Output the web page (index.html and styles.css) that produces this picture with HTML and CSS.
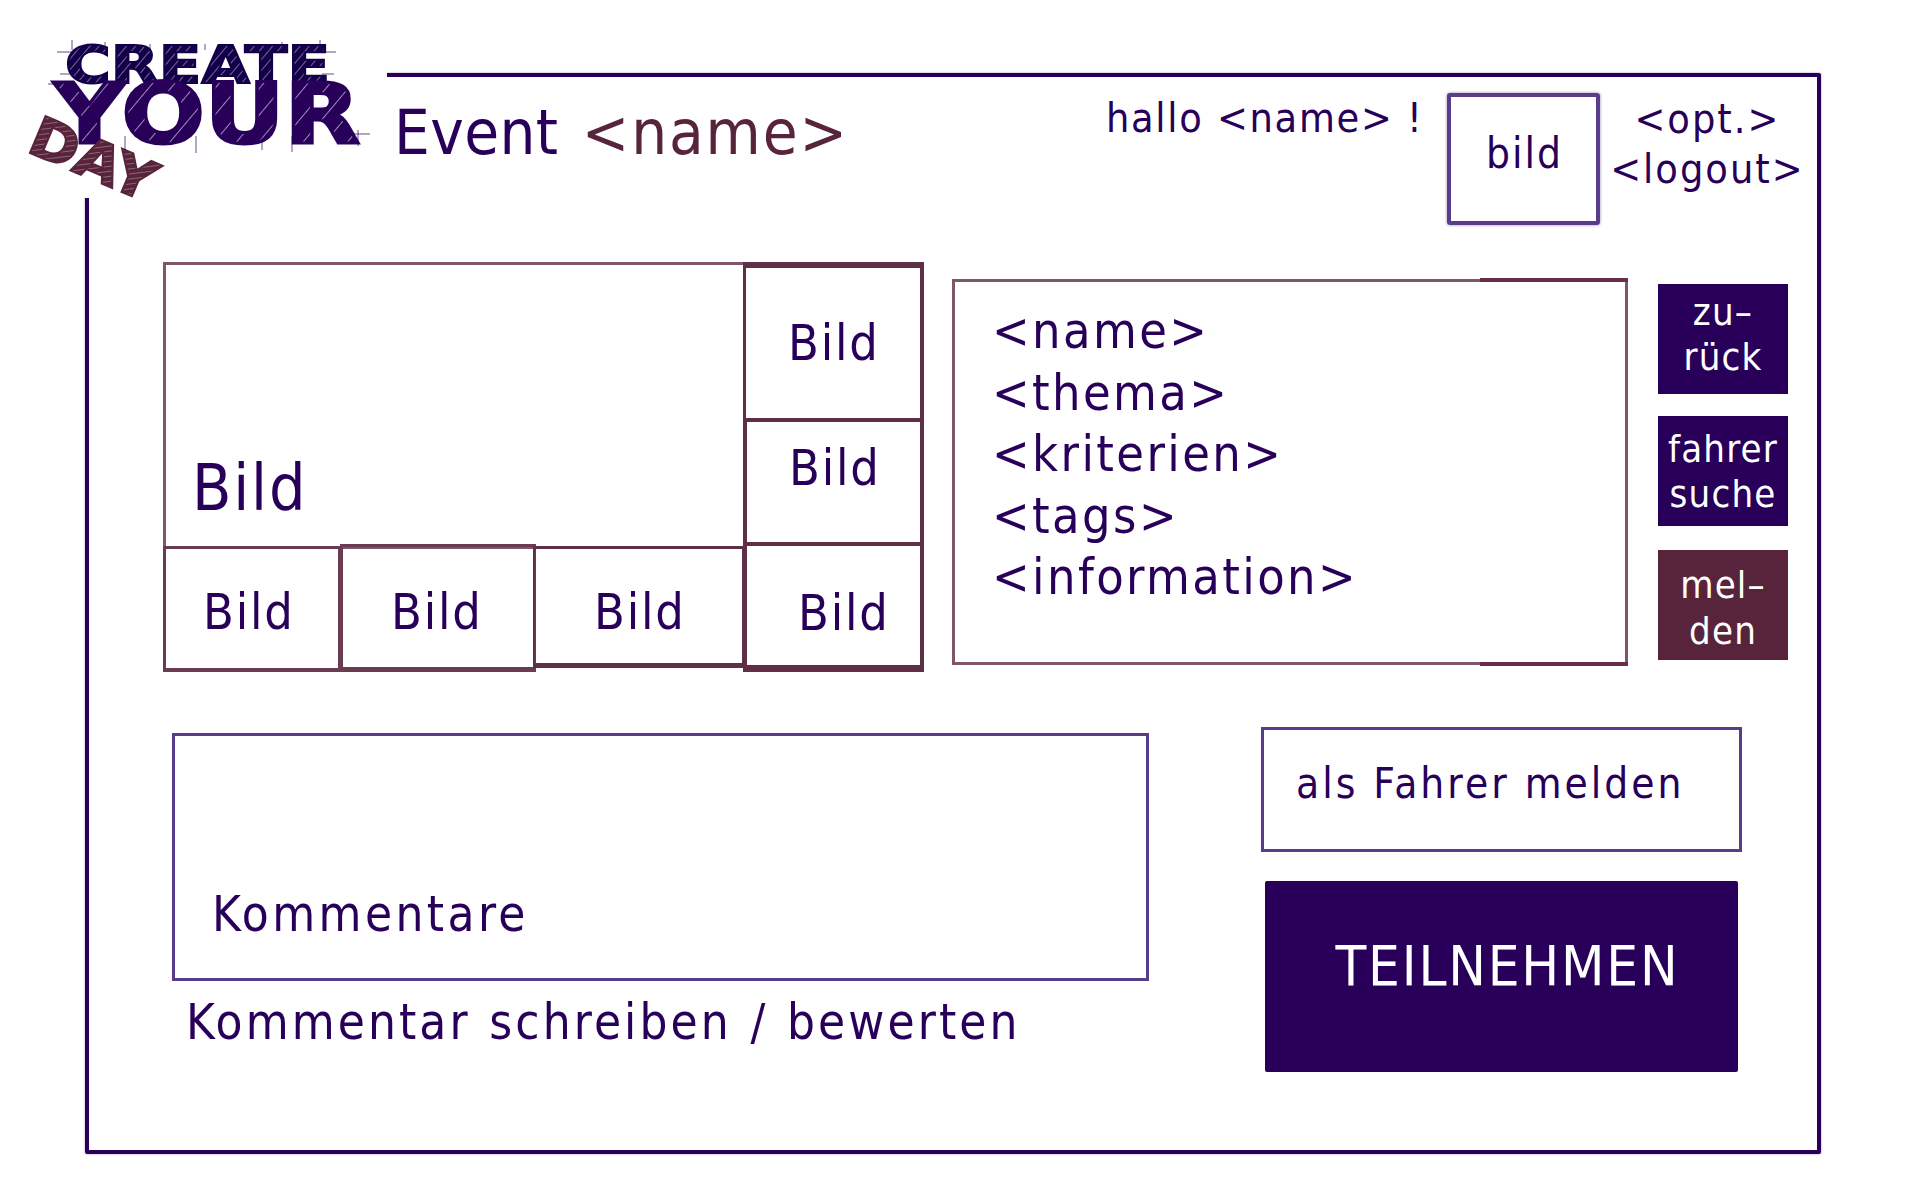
FILE: index.html
```html
<!DOCTYPE html>
<html lang="de">
  <head>
    <meta charset="UTF-8" />
    <meta name="viewport" content="width=device-width, initial-scale=1.0" />
    <title>Event</title>
    <link rel="stylesheet" href="styles.css">
  </head>
  <body>
    <svg class="logo" width="387" height="198" viewBox="0 0 387 198">
      <defs>
        <pattern id="hatch-navy" width="7" height="7" patternUnits="userSpaceOnUse" patternTransform="rotate(-50)">
          <rect width="7" height="7" fill="#14004a"></rect>
          <rect width="7" height="1" fill="#ffffff" fill-opacity="0.4"></rect>
        </pattern>
        <pattern id="hatch-purple" width="17" height="17" patternUnits="userSpaceOnUse" patternTransform="rotate(-50)">
          <rect width="17" height="17" fill="#28005a"></rect>
          <rect width="17" height="1" fill="#ffffff" fill-opacity="0.55"></rect>
        </pattern>
        <pattern id="hatch-maroon" width="5" height="5" patternUnits="userSpaceOnUse" patternTransform="rotate(-30)">
          <rect width="5" height="5" fill="#58243c"></rect>
          <rect width="5" height="1" fill="#ffffff" fill-opacity="0.3"></rect>
        </pattern>
      </defs>
      <text class="logo-word logo-create" x="65" y="83" textLength="265" lengthAdjust="spacingAndGlyphs">CREATE</text>
      <text class="logo-word logo-your" x="54" y="143" textLength="306" lengthAdjust="spacingAndGlyphs">YOUR</text>
      <text class="logo-word logo-day" transform="translate(25 151) rotate(23)" textLength="132" lengthAdjust="spacingAndGlyphs">DAY</text>
      <g class="logo-lines">
        <path d="M57 52H72M60 74H72M322 52H336M322 74H334M72 40V50M105 42V50M150 44V50M205 44V50M282 42V50M320 40V50"></path>
        <path d="M48 84H66M352 134H370M125 136V150M196 136V153M262 136V150M292 136V152M358 130V146"></path>
      </g>
    </svg>

    <main class="frame">
      <header class="topbar">
        <h1 class="event-title">Event <span class="event-name">&lt;name&gt;</span></h1>
        <div class="greeting">hallo &lt;name&gt; !</div>
        <div class="avatar">bild</div>
        <div class="user-links">
          <div>&lt;opt.&gt;</div>
          <div>&lt;logout&gt;</div>
        </div>
      </header>

      <section class="upper">
        <div class="gallery">
          <div class="gallery-left">
            <div class="pic pic-main">Bild</div>
            <div class="gallery-row">
              <div class="pic pic-a">Bild</div>
              <div class="pic pic-b">Bild</div>
              <div class="pic pic-c">Bild</div>
            </div>
          </div>
          <div class="gallery-right">
            <div class="pic pic-d">Bild</div>
            <div class="pic pic-e">Bild</div>
            <div class="pic pic-f">Bild</div>
          </div>
        </div>

        <div class="info">
          <div>&lt;name&gt;</div>
          <div>&lt;thema&gt;</div>
          <div>&lt;kriterien&gt;</div>
          <div>&lt;tags&gt;</div>
          <div>&lt;information&gt;</div>
        </div>

        <div class="side-buttons">
          <button class="side-btn side-btn-back">zu–<br />rück</button>
          <button class="side-btn side-btn-driver">fahrer<br />suche</button>
          <button class="side-btn side-btn-report">mel–<br />den</button>
        </div>
      </section>

      <section class="lower">
        <div class="comments-col">
          <div class="comments">Kommentare</div>
          <div class="write-comment">Kommentar schreiben / bewerten</div>
        </div>
        <div class="actions">
          <div class="driver-box">als Fahrer melden</div>
          <button class="join-btn">TEILNEHMEN</button>
        </div>
      </section>
    </main>
  </body>
</html>
```

FILE: styles.css
```css
* {
  box-sizing: border-box;
}

body {
  margin: 0;
  padding: 73px 0 0 85px;
  height: 1200px;
  overflow: hidden;
  position: relative;
  background: #fff;
  color: #28005a;
  font-family: "DejaVu Sans", sans-serif;
  font-stretch: condensed;
}

button {
  font: inherit;
  font-stretch: condensed;
  border: none;
  color: #fff;
  padding: 0;
}

.logo {
  position: absolute;
  top: 0;
  left: 0;
  background: #fff;
}
.logo-word {
  font-family: "DejaVu Sans", sans-serif;
  font-weight: bold;
  font-stretch: normal;
}
.logo-create {
  font-size: 51px;
  fill: url(#hatch-navy);
  stroke: #14004a;
  stroke-width: 2px;
}
.logo-your {
  font-size: 83px;
  fill: url(#hatch-purple);
  stroke: #28005a;
  stroke-width: 3px;
}
.logo-day {
  font-size: 55px;
  fill: url(#hatch-maroon);
  stroke: #58243c;
  stroke-width: 2px;
}
.logo-lines path {
  fill: none;
  stroke: #28005a;
  stroke-width: 1px;
  stroke-opacity: 0.7;
}

.frame {
  width: 1736px;
  height: 1081px;
  border: 4px solid #28005a;
  border-radius: 2px;
  box-shadow: 0 0 2px rgba(40, 0, 90, 0.5);
}

.topbar {
  display: flex;
  height: 185px;
  line-height: 1;
}
.event-title {
  margin: 24px 0 0 305px;
  font-size: 63px;
  font-weight: normal;
  letter-spacing: 0.4px;
  word-spacing: 5px;
}
.event-name {
  color: #58243c;
  letter-spacing: 1.9px;
}
.greeting {
  margin: 21px 0 0 257px;
  width: 341px;
  font-size: 41px;
  letter-spacing: 1.7px;
}
.avatar {
  width: 153px;
  height: 132px;
  margin-top: 16px;
  padding: 36px 0 0 35px;
  border: 4px solid #5a3d88;
  border-radius: 3px;
  box-shadow: 0 0 3px rgba(40, 0, 90, 0.5);
  font-size: 42px;
  letter-spacing: 2px;
}
.user-links {
  width: 205px;
  margin: 17px 0 0 5px;
  font-size: 41px;
  line-height: 50px;
  letter-spacing: 2px;
  text-align: center;
}

.upper {
  display: flex;
  align-items: flex-start;
  height: 465px;
  padding-left: 74px;
}

.gallery {
  display: flex;
  width: 761px;
  height: 410px;
}
.gallery-left {
  width: 583px;
  display: flex;
  flex-direction: column;
}
.gallery-right {
  width: 178px;
  display: flex;
  flex-direction: column;
}
.gallery-row {
  display: flex;
  height: 126px;
  margin-top: -3px;
}
.pic {
  border: 3px solid #6a3c54;
  font-size: 50px;
  line-height: 1;
  letter-spacing: 1.8px;
}
.pic-main {
  height: 287px;
  padding: 191px 0 0 26px;
  font-size: 64px;
  border-color: #7d566a;
}
.pic-a {
  width: 178px;
  padding: 38px 0 0 37px;
  border-bottom-width: 4px;
}
.pic-b {
  width: 196px;
  margin: -2px 0 0 -1px;
  padding: 40px 0 0 48px;
  border-bottom-width: 5px;
}
.pic-c {
  width: 212px;
  margin-left: -3px;
  padding: 38px 0 0 59px;
  height: 122px;
  border-color: #5e2f47;
  border-bottom-width: 5px;
  border-left-width: 2px;
}
.pic-d {
  height: 160px;
  margin-left: -3px;
  padding: 50px 0 0 42px;
  border-top-width: 6px;
  border-right-width: 4px;
  border-color: #5e2f47;
}
.pic-e {
  height: 126px;
  margin: -2px 0 0 -3px;
  padding: 21px 0 0 42px;
  border-right-width: 4px;
  border-left-width: 4px;
  border-color: #5e2f47;
}
.pic-f {
  height: 130px;
  margin: -2px 0 0 -3px;
  padding: 42px 0 0 51px;
  border-width: 3px 4px 7px 4px;
  border-color: #5e2f47;
}

.info {
  position: relative;
  width: 676px;
  height: 386px;
  margin: 17px 0 0 28px;
  padding: 19px 0 0 37px;
  border: 3px solid #7d566a;
  font-size: 50px;
  line-height: 61.5px;
  letter-spacing: 2.4px;
}
.info::before,
.info::after {
  content: "";
  position: absolute;
  right: -3px;
  width: 148px;
  height: 4px;
  background: #6a2c48;
}
.info::before {
  top: -4px;
}
.info::after {
  bottom: -4px;
}

.side-buttons {
  display: flex;
  flex-direction: column;
  width: 130px;
  margin: 22px 0 0 30px;
}
.side-btn {
  height: 110px;
  margin-bottom: 22px;
  background: #28005a;
  font-size: 38px;
  line-height: 45px;
  letter-spacing: 1.2px;
}
.side-btn-back {
  padding-bottom: 8px;
}
.side-btn-driver {
  padding-top: 2px;
}
.side-btn-report {
  background: #58243c;
  margin-top: 2px;
  padding-top: 6px;
  line-height: 46px;
}

.lower {
  display: flex;
  align-items: flex-start;
  padding-left: 83px;
}
.comments-col {
  width: 1089px;
  margin-top: 6px;
}
.comments {
  width: 977px;
  height: 248px;
  padding: 154px 0 0 37px;
  border: 3px solid #5a3d88;
  font-size: 49px;
  line-height: 1;
  letter-spacing: 3.4px;
}
.write-comment {
  margin: 17px 0 0 14px;
  font-size: 49px;
  line-height: 1;
  letter-spacing: 3.1px;
  word-spacing: 1.5px;
}
.actions {
  width: 481px;
}
.driver-box {
  height: 125px;
  padding: 33px 0 0 32px;
  border: 3px solid #5a3d88;
  font-size: 42px;
  line-height: 1;
  letter-spacing: 3px;
}
.join-btn {
  display: block;
  width: 473px;
  height: 191px;
  margin: 29px 0 0 4px;
  padding: 0 0 22px 12px;
  background: #28005a;
  border-radius: 2px;
  font-size: 56px;
  letter-spacing: 1.8px;
}
```
